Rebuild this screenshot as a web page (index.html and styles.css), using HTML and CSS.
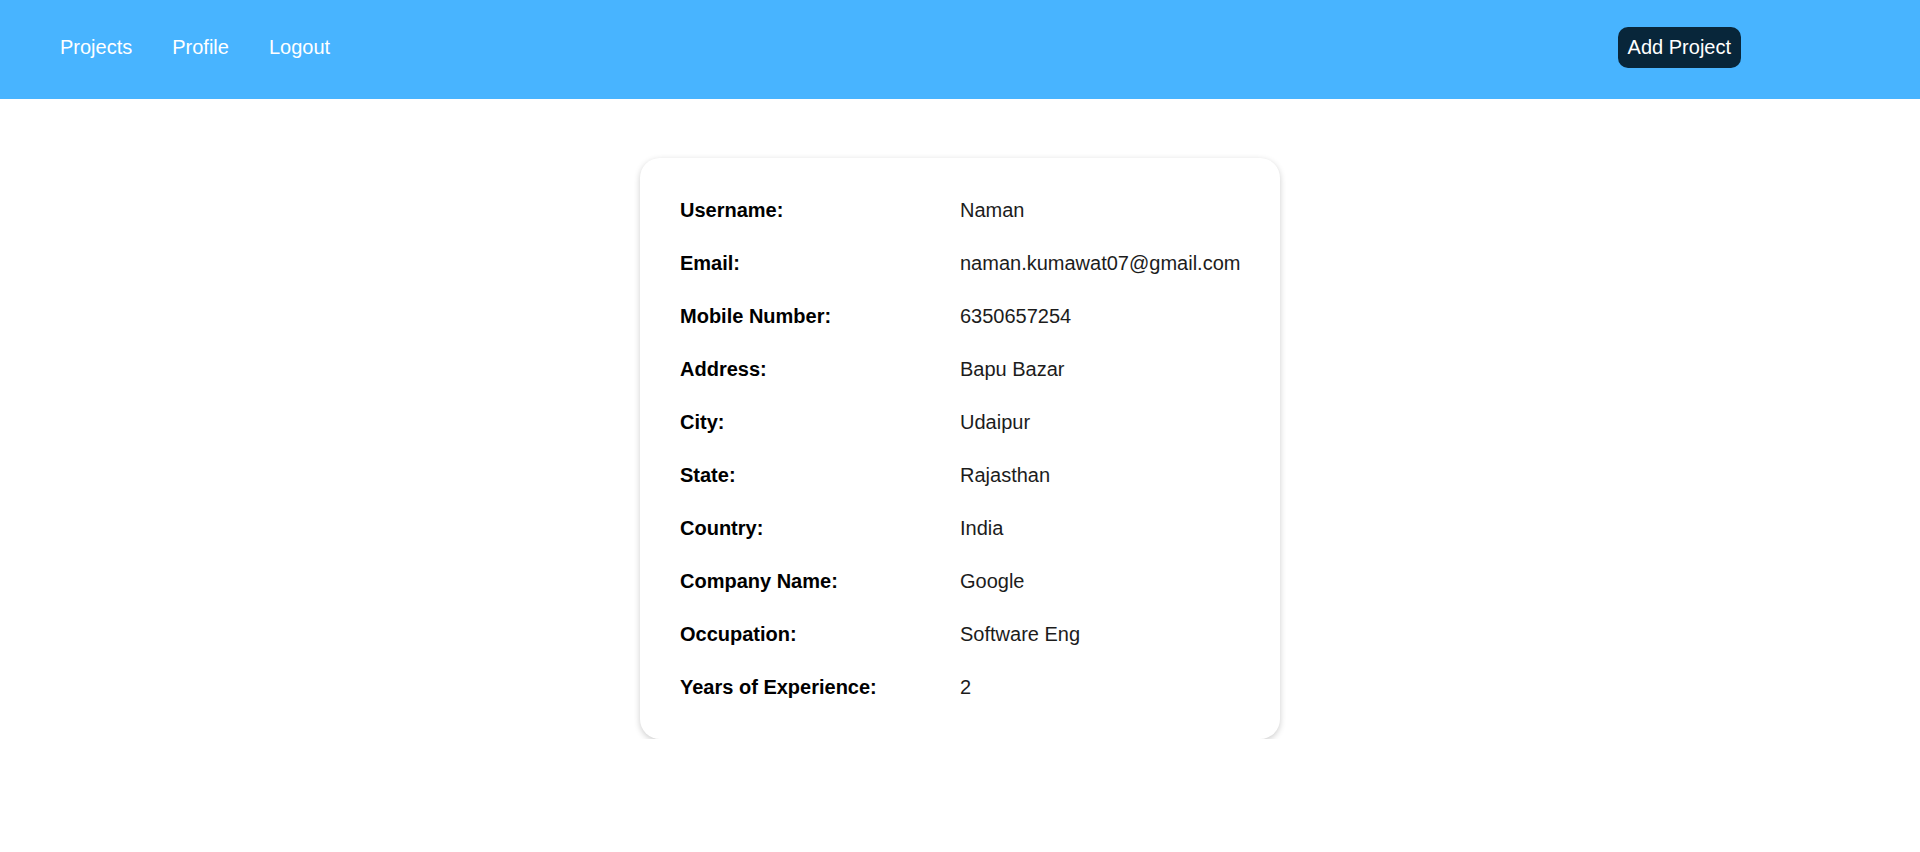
FILE: index.html
```html
<!DOCTYPE html>
<html lang="en">
<head>
<meta charset="utf-8">
<title>Profile</title>
<link rel="stylesheet" href="styles.css">
</head>
<body>
<header class="navbar">
  <nav class="nav-links">
    <a class="nav-link" href="#">Projects</a>
    <a class="nav-link" href="#">Profile</a>
    <a class="nav-link" href="#">Logout</a>
  </nav>
  <button class="add-btn" type="button">Add Project</button>
</header>
<main class="main">
  <section class="card">
    <div class="row"><span class="label">Username:</span><span class="value">Naman</span></div>
    <div class="row"><span class="label">Email:</span><span class="value">naman.kumawat07@gmail.com</span></div>
    <div class="row"><span class="label">Mobile Number:</span><span class="value">6350657254</span></div>
    <div class="row"><span class="label">Address:</span><span class="value">Bapu Bazar</span></div>
    <div class="row"><span class="label">City:</span><span class="value">Udaipur</span></div>
    <div class="row"><span class="label">State:</span><span class="value">Rajasthan</span></div>
    <div class="row"><span class="label">Country:</span><span class="value">India</span></div>
    <div class="row"><span class="label">Company Name:</span><span class="value">Google</span></div>
    <div class="row"><span class="label">Occupation:</span><span class="value">Software Eng</span></div>
    <div class="row"><span class="label">Years of Experience:</span><span class="value">2</span></div>
  </section>
</main>
</body>
</html>
```

FILE: styles.css
```css
* { box-sizing: border-box; }
html, body {
  margin: 0;
  padding: 0;
  background: #ffffff;
  font-family: "Liberation Sans", Arial, sans-serif;
  font-size: 20px;
  line-height: 23px;
}
.navbar {
  height: 99px;
  background: #48b4ff;
  display: flex;
  align-items: center;
  justify-content: space-between;
  padding: 0 179px 5px 60px;
}
.nav-links {
  display: flex;
  gap: 40px;
}
.nav-link {
  color: #ffffff;
  text-decoration: none;
  font-size: 20px;
}
.add-btn {
  font-family: inherit;
  font-size: 20px;
  line-height: 23px;
  color: #ffffff;
  background: #08263a;
  border: none;
  border-radius: 10px;
  padding: 9px 10px;
  height: 41px;
}
.main {
  display: flex;
  justify-content: center;
  padding-top: 59px;
}
.card {
  width: 640px;
  background: #ffffff;
  border-radius: 20px;
  box-shadow: 0 2px 6px rgba(0, 0, 0, 0.2);
  padding: 41px 40px 40px;
  display: flex;
  flex-direction: column;
  gap: 30px;
}
.row {
  display: grid;
  grid-template-columns: 280px 1fr;
}
.label {
  font-weight: bold;
  color: #000000;
}
.value {
  color: #1c1c1c;
}
```
